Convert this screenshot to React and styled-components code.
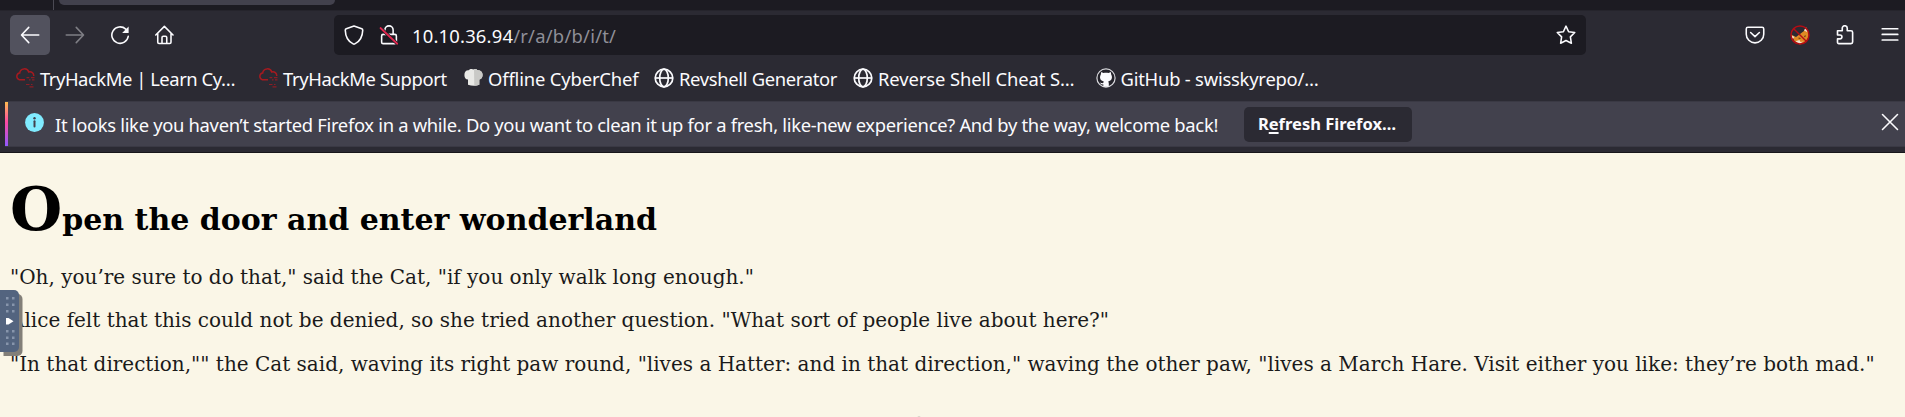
import React from "react";
import styled, { createGlobalStyle } from "styled-components";

const GlobalStyle = createGlobalStyle`
  html, body { margin: 0; padding: 0; overflow: hidden; }
  * { box-sizing: border-box; }
`;

const Window = styled.div`
  display: flex;
  flex-direction: column;
  width: 100%;
  height: 417px;
  overflow: hidden;
  background: #faf6e7;
  color: #fbfbfe;
  font: 18.4px/25px "Noto Sans", "Open Sans", sans-serif;
  white-space: nowrap;
`;

const TabStrip = styled.div`
  display: flex;
  flex: none;
  height: 10px;
  background: #1c1b22;
`;

const TabSeparator = styled.div`
  width: 54px;
  border-right: 1px solid #4b4a54;
`;

const ActiveTab = styled.div`
  width: 276px;
  height: 5px;
  margin-left: 5px;
  border-radius: 0 0 5px 5px;
  background: #42414d;
`;

const Toolbar = styled.div`
  display: flex;
  flex: none;
  align-items: center;
  height: 47px;
  padding: 2px 0 0 10px;
  border-top: 1px solid #25242c;
  background: #2b2a33;
`;

const ButtonGroup = styled.div`
  display: flex;
  gap: 5px;
`;

const ToolButton = styled.button`
  display: flex;
  flex: none;
  align-items: center;
  justify-content: center;
  width: 40px;
  height: 40px;
  padding: 0;
  border: 0;
  border-radius: 5px;
  color: #fbfbfe;
  background: ${(p) => (p.$active ? "#52525e" : "transparent")};
  opacity: ${(p) => (p.$dim ? 0.4 : 1)};
`;

const AddressBar = styled.div`
  display: flex;
  flex: none;
  align-items: center;
  width: 1252px;
  height: 40px;
  margin-left: 149px;
  padding: 0 10px;
  border-radius: 5px;
  background: #1c1b22;
`;

const SiteIcons = styled.div`
  display: flex;
  gap: 15px;
  margin-right: 13px;
`;

const Host = styled.span`
  letter-spacing: 0.2px;
`;

const Path = styled.span`
  flex: 1;
  color: #8f8f98;
  letter-spacing: 0.25px;
`;

const ToolbarEnd = styled.div`
  display: flex;
  flex: none;
  gap: 5px;
  width: 170px;
  margin-left: auto;
`;

const Bookmarks = styled.nav`
  display: flex;
  flex: none;
  align-items: center;
  height: 44px;
  padding: 0 0 2px 15px;
  background: #2b2a33;
`;

const Bookmark = styled.a`
  display: flex;
  align-items: center;
  gap: 5px;
  width: ${(p) => p.$width}px;
  letter-spacing: ${(p) => p.$track}px;
`;

const NoticeArea = styled.div`
  flex: none;
  height: 52px;
  border-bottom: 1px solid #17161b;
  background: #2b2a33;
`;

const Notice = styled.div`
  display: flex;
  align-items: center;
  height: 46px;
  margin-left: 5px;
  border-top: 1px solid #3a3944;
  border-bottom: 1px solid #3a3944;
  background: #42414d;
`;

const Accent = styled.div`
  align-self: stretch;
  width: 3px;
  margin-right: 17px;
  background: linear-gradient(#ffbd4f, #ff4aa2 45%, #9059ff);
`;

const InfoBadge = styled.div`
  display: flex;
  margin: 0 11px 4px 0;
`;

const Message = styled.span`
  width: 1189px;
  padding-top: 1px;
  letter-spacing: -0.312px;
`;

const RefreshButton = styled.button`
  width: 168px;
  height: 35px;
  padding: 0 2px 1px 0;
  border: 0;
  border-radius: 5px;
  color: #fbfbfe;
  background: #2b2a33;
  font: bold 16.5px/24px "Noto Sans", "Open Sans", sans-serif;
`;

const AccessKey = styled.span`
  text-decoration: underline;
  text-decoration-thickness: 2px;
  text-underline-offset: 2px;
`;

const CloseButton = styled.button`
  display: flex;
  margin: 0 5px 4px auto;
  padding: 0;
  border: 0;
  color: #fbfbfe;
  background: none;
`;

const Page = styled.main`
  position: relative;
  display: flex;
  flex: 1;
  flex-direction: column;
  gap: 20px;
  padding: 21px 0 0 10px;
  color: #1a1a1a;
  font: 20px/23.75px "DejaVu Serif", serif;
`;

const Title = styled.h2`
  flex: none;
  height: 70px;
  margin: 0 0 1.5px;
  color: #000;
  font-size: 30px;
  line-height: 70px;
  &::first-letter { font-size: 60px; line-height: 70px; }
`;

const Paragraph = styled.p`
  flex: none;
  margin: 0;
`;

const Picture = styled.div`
  display: flex;
  flex: none;
  margin: 19.5px 0 0 906px;
`;

const DrawerHandle = styled.div`
  position: absolute;
  top: 137px;
  left: 0;
  display: flex;
  width: 19px;
  height: 62px;
  border-radius: 0 5px 5px 0;
  background: #53647f;
  box-shadow: 3.5px 4px 0 #827f79;
`;

const Stroke = ({ size = 20, width = 1.25, children }) => (
  <svg width={size} height={size} viewBox="0 0 16 16" fill="none" stroke="currentColor" strokeWidth={width} strokeLinecap="round" strokeLinejoin="round">
    {children}
  </svg>
);

const BackIcon = () => <Stroke><path d="M15 8H1.3M7 1.9 1.2 8 7 14.1" /></Stroke>;
const ForwardIcon = () => <Stroke><path d="M1 8h13.7M9 1.9 14.8 8 9 14.1" /></Stroke>;
const ReloadIcon = () => (
  <Stroke>
    <path d="M12.6 3.3A6.6 6.6 0 1 0 14.6 9" />
    <path d="M14.9 1.2v5.2H9.7z" fill="currentColor" stroke="none" />
  </Stroke>
);
const HomeIcon = () => (
  <Stroke>
    <path d="M.6 8 7.500 1.100 14.400 8M2.200 6.700v7.100c0 .6.4 1 1 1h8.600c.6 0 1-.4 1-1V6.700M5.600 14.600V10c0-.6.4-1 1-1h1.800c.6 0 1 .4 1 1v4.600" />
  </Stroke>
);
const ShieldIcon = () => <Stroke><path d="M8 .8 14.2 3c.5.2.8.6.8 1.1-.2 5.2-2.4 9.2-6.3 11a1.6 1.6 0 0 1-1.4 0C3.4 13.3 1.2 9.3 1 4.1 1 3.6 1.3 3.2 1.8 3z" /></Stroke>;
const InsecureIcon = () => (
  <Stroke>
    <path d="M4.7 7.5V4a3.3 3.3 0 0 1 6.6 0v3.5M3.3 7.5h9.4c.7 0 1.2.5 1.2 1.2v5c0 .7-.5 1.2-1.2 1.2H3.3c-.7 0-1.2-.5-1.2-1.2v-5c0-.7.5-1.2 1.2-1.2z" />
    <path d="M1.2 2.4 14.6 15" stroke="#1c1b22" strokeWidth="2.6" />
    <path d="M1.2 2.4 14.6 15" stroke="#e22850" strokeWidth="1.4" />
  </Stroke>
);
const StarIcon = () => <Stroke><path d="m8 .9 2.1 4.5 4.9.6-3.5 3.5.8 5.1L8 12.4l-4.3 2.2.8-5.1L1 6l4.900-.6z" /></Stroke>;
const PocketIcon = () => <Stroke><path d="M2.3 1.8h11.4c.8 0 1.3.5 1.3 1.3v4.2a7 7 0 0 1-14 0V3.1c0-.8.5-1.3 1.3-1.3zM4.5 6 8 9.3 11.5 6" /></Stroke>;
const PuzzleIcon = () => <Stroke width={1.3}><path d="M2 4.6h3.8V2.6a2 2 0 0 1 4 0v2h3c.8 0 1.3.5 1.3 1.3v7.7c0 .8-.5 1.3-1.3 1.3H3.1c-.7 0-1.1-.5-1.1-1.1v-2.7h2a1.5 1.5 0 0 0 0-3.1H2z" /></Stroke>;
const MenuIcon = () => <Stroke width={1.35}><path d="M1.8 3h12.4M1.8 7.5h12.4M1.8 12h12.4" /></Stroke>;
const CloseIcon = () => <Stroke><path d="m2 2 12 12M14 2 2 14" /></Stroke>;
const FoxIcon = () => (
  <svg width="20" height="20" viewBox="0 0 20 20">
    <path d="M1 9.5 6 12l8-6 2-4 2 4 .8 5-3 6.5-6 2-5-3z" fill="#e08a24" />
    <path d="M1.3 10.2 4.5 12l-2 2zM14 5.5 16 2.2l1.6 5zM5.500 16.2l4-1.2 1 2 3-.4-4 2.4z" fill="#f3e3cf" />
    <path d="m8.5 13 2 .5M14.5 12l1-1.5" stroke="#633719" strokeWidth="1.2" />
    <circle cx="10" cy="10" r="9" fill="none" stroke="#b30d14" strokeWidth="1.5" />
    <path d="m3.7 3.7 12.6 12.6" stroke="#b30d14" strokeWidth="1.4" />
  </svg>
);
const CloudIcon = () => (
  <svg width="20" height="20" viewBox="0 0 20 20" fill="none" stroke="#a51a20" strokeWidth="1.5">
    <path d="M10 11.7H4.3A3.5 3.5 0 0 1 4.3 5h.4A4.7 4.7 0 0 1 13.8 4a3.8 3.8 0 0 1 4.9 4" />
    <path d="M11.5 9.7h2.8M16 9.7h3.5M14 11.9h1.5M17 11.9h2.5M11 16.5h3.5M16 16.5h1.5M14.5 18.8h4" strokeWidth="1.2" opacity=".8" />
  </svg>
);
const ChefIcon = () => (
  <svg width="19" height="20" viewBox="0 0 19 20">
    <path d="M4 11.5C1.5 11.5.4 9.6.4 7c0-3.3 1.8-5 4.3-4.7C6 .8 7.7.8 9 1.5c1.7-1 3.5-.7 4.5.7 3-.2 5.1 1.6 5.1 4.6 0 2.6-1.1 4.4-3.3 4.7v5.3c-3.5 1.3-7.5 1.3-11.3 0z" fill="#e9e9e6" />
    <path d="M10 1.2c1.5-.6 2.7-.1 3.5 1 3-.2 5.1 1.6 5.1 4.6 0 2.6-1.1 4.4-3.3 4.7v5.3c-1.7.7-3.3.9-5 .9z" fill="#c9c9c6" />
  </svg>
);
const GlobeIcon = () => (
  <svg width="20" height="20" viewBox="0 0 20 20" fill="none" stroke="currentColor" strokeWidth="1.7">
    <circle cx="10" cy="10" r="8.8" />
    <ellipse cx="10" cy="10" rx="4.3" ry="8.8" />
    <path d="M1.2 10h17.6" />
  </svg>
);
const GitHubIcon = () => (
  <svg width="20" height="20" viewBox="0 0 20 20">
    <circle cx="10" cy="10" r="9.1" fill="#24232b" stroke="#d8d8dc" strokeWidth="1.2" />
    <path d="M5.2 3.9 7.5 5c1.6-.4 3.4-.4 5 0l2.3-1.1.4 2.6c1.8 3.5.2 6.4-3 6.9.4.6.6 1.2.6 2v2.9c-1.7.7-3.8.7-5.5 0v-2c-1.7.3-2.5-.2-3.4-1.8 1.2.2 1.8 1 3.4.6 0-.7.2-1.2.5-1.7-3.2-.5-4.8-3.4-3-6.9z" fill="#fbfbfe" />
  </svg>
);
const InfoIcon = () => (
  <svg width="19" height="19" viewBox="0 0 19 19">
    <circle cx="9.5" cy="9.5" r="9.4" fill="#80ebff" />
    <path d="M9.5 8.3v5.2" stroke="#42414d" strokeWidth="2" strokeLinecap="round" />
    <circle cx="9.5" cy="5.2" r="1.2" fill="#42414d" />
  </svg>
);
const HandleGrip = () => (
  <svg width="19" height="62" viewBox="0 0 19 62">
    {[7, 13.5, 20, 40, 46.5, 52.5].map((y) => (
      <path key={y} d={`M6 ${y}h2.5v2.5H6zM12 ${y}h2.5v2.5H12z`} fill="#8795ac" />
    ))}
    <path d="M6 28h2.5l5 3.2-5 3.3H6z" fill="#fff" />
  </svg>
);

const bookmarks = [
  { title: "TryHackMe | Learn Cy…", icon: CloudIcon, width: 243, track: -0.453 },
  { title: "TryHackMe Support", icon: CloudIcon, width: 206, track: -0.38 },
  { title: "Offline CyberChef", icon: ChefIcon, width: 190, track: -0.15 },
  { title: "Revshell Generator", icon: GlobeIcon, width: 199, track: -0.33 },
  { title: "Reverse Shell Cheat S…", icon: GlobeIcon, width: 242.5, track: -0.1 },
  { title: "GitHub - swisskyrepo/…", icon: GitHubIcon, width: 240, track: -0.22 },
];

const paragraphs = [
  '"Oh, you’re sure to do that," said the Cat, "if you only walk long enough."',
  'Alice felt that this could not be denied, so she tried another question. "What sort of people live about here?"',
  '"In that direction,"" the Cat said, waving its right paw round, "lives a Hatter: and in that direction," waving the other paw, "lives a March Hare. Visit either you like: they’re both mad."',
];

export default function App() {
  return (
    <Window>
      <GlobalStyle />
      <TabStrip>
        <TabSeparator />
        <ActiveTab />
      </TabStrip>
      <Toolbar>
        <ButtonGroup>
          <ToolButton $active><BackIcon /></ToolButton>
          <ToolButton $dim><ForwardIcon /></ToolButton>
          <ToolButton><ReloadIcon /></ToolButton>
          <ToolButton><HomeIcon /></ToolButton>
        </ButtonGroup>
        <AddressBar>
          <SiteIcons>
            <ShieldIcon />
            <InsecureIcon />
          </SiteIcons>
          <Host>10.10.36.94</Host>
          <Path>/r/a/b/b/i/t/</Path>
          <StarIcon />
        </AddressBar>
        <ToolbarEnd>
          <ToolButton><PocketIcon /></ToolButton>
          <ToolButton><FoxIcon /></ToolButton>
          <ToolButton><PuzzleIcon /></ToolButton>
          <ToolButton><MenuIcon /></ToolButton>
        </ToolbarEnd>
      </Toolbar>
      <Bookmarks>
        {bookmarks.map(({ title, icon: Icon, width, track }) => (
          <Bookmark key={title} $width={width} $track={track}>
            <Icon />
            {title}
          </Bookmark>
        ))}
      </Bookmarks>
      <NoticeArea>
        <Notice>
          <Accent />
          <InfoBadge><InfoIcon /></InfoBadge>
          <Message>
            It looks like you haven’t started Firefox in a while. Do you want to clean it up for a fresh, like-new experience? And by the way, welcome back!
          </Message>
          <RefreshButton>R<AccessKey>e</AccessKey>fresh Firefox…</RefreshButton>
          <CloseButton><CloseIcon /></CloseButton>
        </Notice>
      </NoticeArea>
      <Page>
        <Title>Open the door and enter wonderland</Title>
        {paragraphs.map((text) => <Paragraph key={text}>{text}</Paragraph>)}
        <Picture>
          <svg width="6" height="4" viewBox="0 0 6 4"><path d="M0 2q3-3 6 0z" fill="#a9a8a3" /></svg>
        </Picture>
        <DrawerHandle><HandleGrip /></DrawerHandle>
      </Page>
    </Window>
  );
}
